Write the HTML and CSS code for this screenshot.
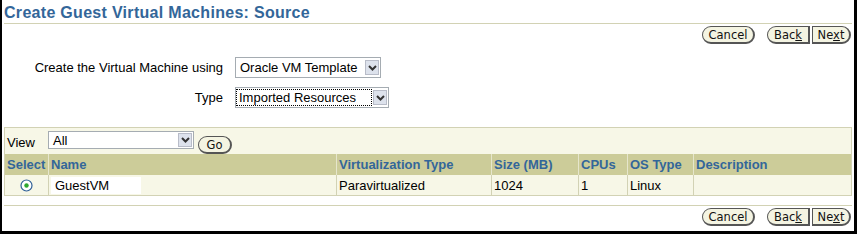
FILE: index.html
```html
<!DOCTYPE html>
<html lang="en">
<head>
    <meta charset="UTF-8">
    <title>Create Guest Virtual Machines: Source</title>
    <link rel="stylesheet" href="styles.css">
</head>
<body>

<div class="frame">
    <h1 class="title">Create Guest Virtual Machines: Source</h1>

    <div class="actions">
        <button class="btn cancel">Cancel</button>
        <button class="btn back">Bac<u>k</u></button>
        <button class="btn next">Ne<u>x</u>t</button>
    </div>

    <div class="form">
        <label class="form-label">Create the Virtual Machine using</label>
        <div class="select select-source">
            <span class="select-text">Oracle VM Template</span>
            <span class="select-arrow"><svg width="9" height="6" viewBox="0 0 9 6"><path d="M1 1 L4.5 4.5 L8 1" fill="none" stroke="#333" stroke-width="2"/></svg></span>
        </div>
        <label class="form-label">Type</label>
        <div class="select select-type">
            <span class="select-text focused">Imported Resources</span>
            <span class="select-arrow"><svg width="9" height="6" viewBox="0 0 9 6"><path d="M1 1 L4.5 4.5 L8 1" fill="none" stroke="#333" stroke-width="2"/></svg></span>
        </div>
    </div>

    <div class="results">
        <div class="view-bar">
            <span class="view-label">View</span>
            <div class="select select-view">
                <span class="select-text">All</span>
                <span class="select-arrow"><svg width="9" height="6" viewBox="0 0 9 6"><path d="M1 1 L4.5 4.5 L8 1" fill="none" stroke="#333" stroke-width="2"/></svg></span>
            </div>
            <button class="btn go">Go</button>
        </div>
        <table class="vm-table">
            <tr>
                <th class="col-select">Select</th>
                <th class="col-name">Name</th>
                <th class="col-virt">Virtualization Type</th>
                <th class="col-size">Size (MB)</th>
                <th class="col-cpus">CPUs</th>
                <th class="col-os">OS Type</th>
                <th>Description</th>
            </tr>
            <tr>
                <td class="radio-cell">
                    <svg width="13" height="13" viewBox="0 0 13 13">
                        <circle cx="6.5" cy="6.5" r="5.5" fill="#fff" stroke="#2f5f96" stroke-width="1.2"/>
                        <circle cx="6.5" cy="6.5" r="2.2" fill="#2fa82f"/>
                    </svg>
                </td>
                <td><span class="name-field">GuestVM</span></td>
                <td>Paravirtualized</td>
                <td>1024</td>
                <td>1</td>
                <td>Linux</td>
                <td></td>
            </tr>
        </table>
    </div>

    <div class="divider"></div>

    <div class="actions">
        <button class="btn cancel">Cancel</button>
        <button class="btn back">Bac<u>k</u></button>
        <button class="btn next">Ne<u>x</u>t</button>
    </div>
</div>

</body>
</html>
```

FILE: styles.css
```css
html, body {
    margin: 0;
    padding: 0;
    height: 234px;
    overflow: hidden;
    background-color: #000; /* black frame around the page */
}

body {
    font-family: "Liberation Sans", Arial, sans-serif;
    font-size: 13px;
    color: #000;
}

.frame {
    width: 852px;
    height: 231px;
    margin-left: 2px;
    padding: 0 2px;
    box-sizing: border-box;
    background-color: #fff;
}

.title {
    margin: 0;
    padding-top: 3px;
    font-size: 16px;
    font-weight: bold;
    letter-spacing: 0.3px;
    line-height: 20px;
    color: #336699;
    border-bottom: 1px solid #d2d2b4;
}

.actions {
    display: flex;
    justify-content: flex-end;
    margin-top: 2px;
    padding-right: 1px;
}

.btn {
    height: 18px;
    box-sizing: border-box;
    padding: 0;
    border: 1px solid #555;
    border-right-width: 2px;
    border-bottom-width: 2px;
    border-radius: 9px;
    background-color: #f4f4e2;
    font-family: "DejaVu Sans", sans-serif;
    font-size: 11.5px;
    line-height: 14px;
    color: #111;
    text-align: center;
}

.cancel {
    width: 53px;
    margin-right: 12px;
}

.back {
    width: 43px;
    margin-right: 2px;
    border-radius: 9px 0 0 9px;
}

.next {
    width: 39px;
    border-radius: 0 9px 9px 0;
}

.form {
    display: grid;
    grid-template-columns: 219px auto;
    column-gap: 12px;
    row-gap: 9px;
    align-items: center;
    margin-top: 13px;
}

.form-label {
    text-align: right;
}

.select {
    display: flex;
    align-items: center;
    box-sizing: border-box;
    height: 21px;
    border: 1px solid #a5acb2;
    background-color: #fff;
    font-size: 13px;
}

.select-text {
    flex: 1;
    padding-left: 4px;
    line-height: 15px;
}

.focused {
    margin: 0 2px 0 1px;
    padding-left: 2px;
    outline: 1px dotted #000;
}

.select-arrow {
    display: flex;
    align-items: center;
    justify-content: center;
    width: 14px;
    height: 15px;
    margin-right: 1px;
    box-sizing: border-box;
    border: 1px solid #b8bcc8;
    background-color: #dde2ec;
}

.select-source {
    width: 146px;
}

.select-type {
    width: 154px;
}

.results {
    margin-top: 19px;
    border: 1px solid #d2d2b4;
    background-color: #f7f7e7;
}

.view-bar {
    display: flex;
    align-items: flex-start;
    height: 26px;
    box-sizing: border-box;
    padding: 3px 0 0 2px;
}

.view-label {
    width: 41px;
    margin-top: 4px;
}

.select-view {
    width: 146px;
    height: 18px;
}

.select-view .select-arrow {
    height: 14px;
}

.go {
    width: 34px;
    margin: 5px 0 0 4px;
}

.vm-table {
    width: 100%;
    border-collapse: collapse;
}

.vm-table th {
    height: 21px;
    padding: 0 2px;
    background-color: #cccc99;
    border-left: 1px solid #e6e6cc;
    color: #336699;
    font-size: 13px;
    font-weight: bold;
    text-align: left;
}

.vm-table th:first-child {
    border-left: none;
}

.vm-table td {
    height: 20px;
    padding: 0 2px;
    border-left: 1px solid #d2d2b4;
    font-size: 13px;
}

.vm-table td:first-child {
    border-left: none;
}

.col-select { width: 39px; }
.col-name { width: 283px; }
.col-virt { width: 150px; }
.col-size { width: 82px; }
.col-cpus { width: 44px; }
.col-os { width: 61px; }

.radio-cell {
    text-align: center;
}

.radio-cell svg {
    display: block;
    margin: 0 auto;
}

.name-field {
    display: block;
    width: 90px;
    height: 17px;
    padding-left: 4px;
    box-sizing: border-box;
    background-color: #fff;
    line-height: 17px;
}

.divider {
    margin-top: 9px;
    border-top: 1px solid #d2d2b4;
}
```
